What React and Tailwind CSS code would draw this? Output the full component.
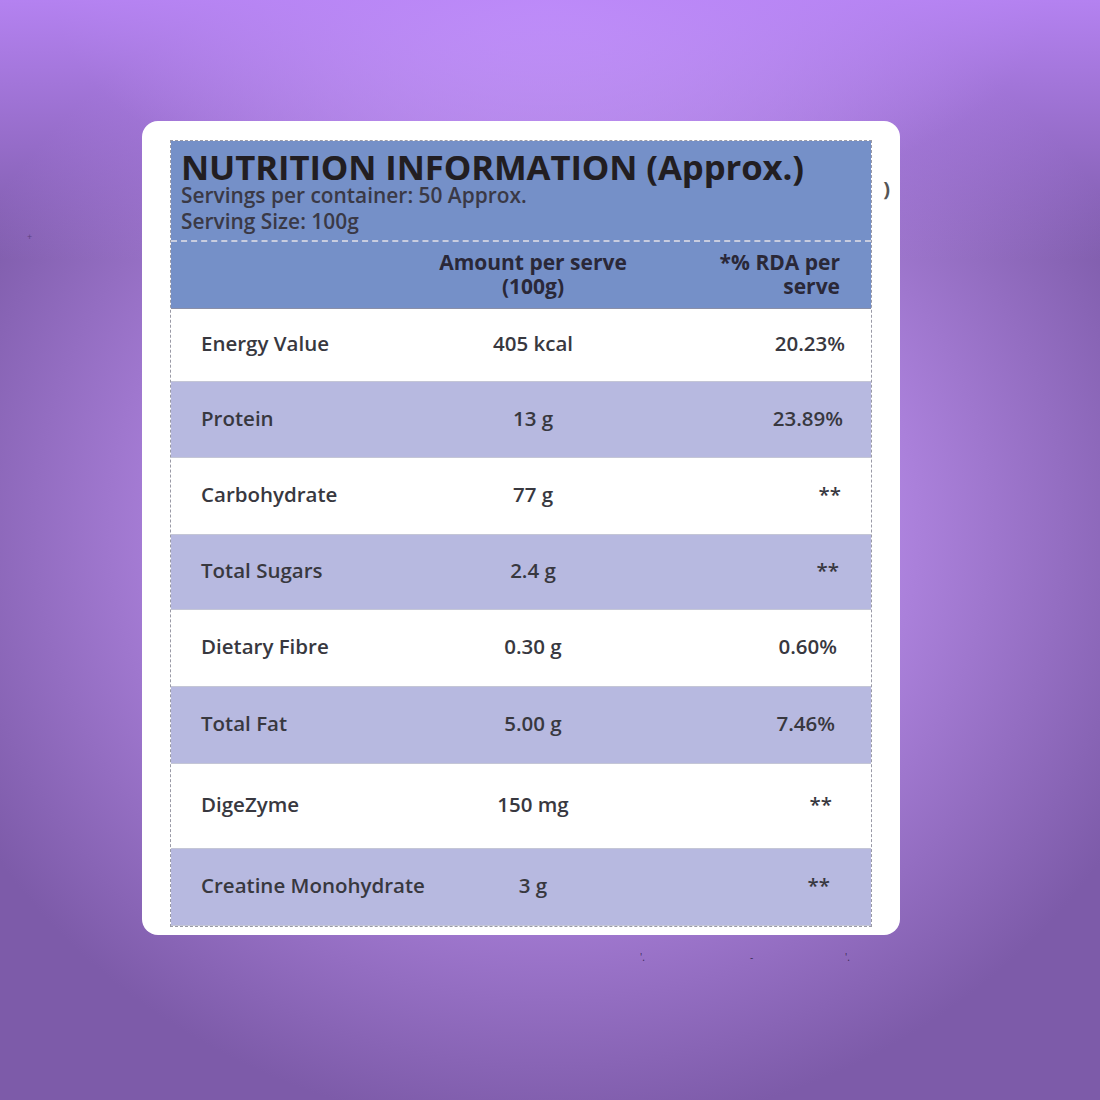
import React from "react";

const rows = [
  { name: "Energy Value", amount: "405 kcal", rda: "20.23%", h: "h-[73px]", pr: "pr-[26px]", bg: "bg-white" },
  { name: "Protein", amount: "13 g", rda: "23.89%", h: "h-[76px]", pr: "pr-[28px]", bg: "bg-[#b7b9e0]" },
  { name: "Carbohydrate", amount: "77 g", rda: "**", h: "h-[77px]", pr: "pr-[30px]", bg: "bg-white" },
  { name: "Total Sugars", amount: "2.4 g", rda: "**", h: "h-[75px]", pr: "pr-[32px]", bg: "bg-[#b7b9e0]" },
  { name: "Dietary Fibre", amount: "0.30 g", rda: "0.60%", h: "h-[77px]", pr: "pr-[34px]", bg: "bg-white" },
  { name: "Total Fat", amount: "5.00 g", rda: "7.46%", h: "h-[77px]", pr: "pr-[36px]", bg: "bg-[#b7b9e0]" },
  { name: "DigeZyme", amount: "150 mg", rda: "**", h: "h-[85px]", pr: "pr-[39px]", bg: "bg-white" },
  { name: "Creatine Monohydrate", amount: "3 g", rda: "**", h: "h-[77px]", pr: "pr-[41px]", bg: "bg-[#b7b9e0]" },
];

const App = () => {
  return (
    <div
      className="relative w-[1100px] h-[1100px] overflow-hidden bg-[radial-gradient(ellipse_60%_55%_at_50%_48%,#cfb0f2_0%,#b589e6_45%,#7d5ba9_100%)]"
      style={{ fontFamily: '"Open Sans", "Noto Sans", sans-serif' }}
    >
      <div className="absolute inset-0 bg-[radial-gradient(ellipse_45%_20%_at_50%_0%,#d2acfd_0%,rgba(185,133,247,0)_100%)]" />
      <div className="absolute inset-x-0 top-0 h-[260px] bg-[linear-gradient(180deg,rgba(186,134,248,0.9),rgba(186,134,248,0))]" />
      <span className="absolute left-[27px] top-[230px] text-[9px] text-[#5a4080]">+</span>
      <span className="absolute left-[640px] top-[950px] text-[10px] text-[#3a2a55]">'.</span>
      <span className="absolute left-[750px] top-[950px] text-[10px] text-[#3a2a55]">-</span>
      <span className="absolute left-[845px] top-[950px] text-[10px] text-[#3a2a55]">'.</span>

      <div className="relative ml-[142px] mt-[121px] w-[758px] h-[814px] bg-white rounded-[16px] pt-[19px] px-[28px]">
        <span className="absolute right-[10px] top-[58px] text-[20px] font-bold leading-none text-[#555]">)</span>
        <div className="border border-[#9a9aa6] border-dashed">
          <div className="h-[101px] bg-[#7590c8] px-[10px] pt-[10px] border-b-2 border-dashed border-[#c8cde0]">
            <div className="text-[34.7px] font-bold leading-[31px] text-[#221e22] tracking-[-0.1px]">
              NUTRITION INFORMATION (Approx.)
            </div>
            <div className="text-[20.9px] font-semibold leading-[26px] text-[#3a3946]">
              Servings per container: 50 Approx.
            </div>
            <div className="text-[20.9px] font-semibold leading-[26px] text-[#3a3946]">Serving Size: 100g</div>
          </div>
          <div className="h-[67px] bg-[#7590c8] flex items-center text-[21px] font-bold leading-[24px] text-[#2a2838] border-b border-[#8a8fa8]">
            <div className="w-[190px]" />
            <div className="w-[344px] text-center pb-[3px]">
              Amount per serve
              <br />
              (100g)
            </div>
            <div className="flex-1 text-right pr-[31px] pb-[3px]">
              *% RDA per
              <br />
              serve
            </div>
          </div>
          {rows.map((r) => (
            <div
              key={r.name}
              className={`${r.h} ${r.bg} flex items-center text-[20.5px] font-semibold text-[#38383f] border-b border-[#c4c6d6] pb-[3px]`}
            >
              <div className="w-[190px] pl-[30px] whitespace-nowrap">{r.name}</div>
              <div className="w-[344px] text-center">{r.amount}</div>
              <div className={`flex-1 text-right ${r.pr}`}>{r.rda}</div>
            </div>
          ))}
        </div>
      </div>
    </div>
  );
};

export default App;
